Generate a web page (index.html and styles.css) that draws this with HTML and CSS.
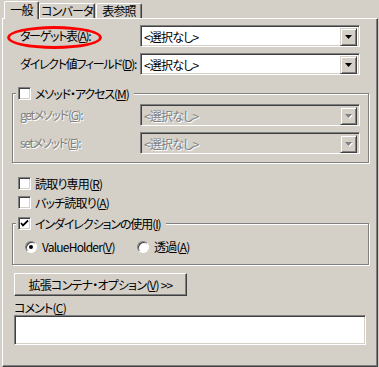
FILE: index.html
```html
<!DOCTYPE html>
<html lang="ja">

<head>
    <meta charset="UTF-8">
    <meta name="viewport" content="width=device-width, initial-scale=1.0">
    <title>一般</title>
    <link rel="stylesheet" href="styles.css">
</head>

<body>
    <div class="tabs">
        <div class="tab active">一般</div>
        <div class="tab tab-conv">コンバータ</div>
        <div class="tab tab-ref">表参照</div>
    </div>

    <div class="panel">
        <div class="row">
            <span class="lbl">ターゲット表(<u>A</u>):</span>
            <div class="combo">
                <span class="val">&lt;選択なし&gt;</span>
                <span class="drop"><svg width="7" height="4" viewBox="0 0 7 4"><polygon points="0,0 7,0 3.5,4" /></svg></span>
            </div>
        </div>
        <div class="row second">
            <span class="lbl">ダイレクト値フィールド(<u>D</u>):</span>
            <div class="combo">
                <span class="val">&lt;選択なし&gt;</span>
                <span class="drop"><svg width="7" height="4" viewBox="0 0 7 4"><polygon points="0,0 7,0 3.5,4" /></svg></span>
            </div>
        </div>

        <!-- method access -->
        <div class="group methods">
            <div class="legend">
                <span class="box"></span>
                <span>メソッド・アクセス(<u>M</u>)</span>
            </div>
            <div class="row inner first-inner">
                <span class="lbl off">getメソッド(<u>G</u>):</span>
                <div class="combo off">
                    <span class="val">&lt;選択なし&gt;</span>
                    <span class="drop"><svg width="8" height="5" viewBox="0 0 8 5"><polygon class="shadow" points="1,1 8,1 4.5,5" /><polygon points="0,0 7,0 3.5,4" /></svg></span>
                </div>
            </div>
            <div class="row inner">
                <span class="lbl off">setメソッド(<u>E</u>):</span>
                <div class="combo off">
                    <span class="val">&lt;選択なし&gt;</span>
                    <span class="drop"><svg width="8" height="5" viewBox="0 0 8 5"><polygon class="shadow" points="1,1 8,1 4.5,5" /><polygon points="0,0 7,0 3.5,4" /></svg></span>
                </div>
            </div>
        </div>

        <div class="check readonly">
            <span class="box"></span>
            <span>読取り専用(<u>R</u>)</span>
        </div>
        <div class="check batch">
            <span class="box"></span>
            <span>バッチ読取り(<u>A</u>)</span>
        </div>

        <!-- indirection -->
        <div class="group indirect">
            <div class="legend">
                <span class="box"><svg width="9" height="9" viewBox="0 0 9 9"><polyline points="1,4 3,6.5 8,1.5" /></svg></span>
                <span>インダイレクションの使用(<u>I</u>)</span>
            </div>
            <div class="options">
                <div class="option first-option">
                    <span class="radio"><span class="dot"></span></span>
                    <span>ValueHolder(<u>V</u>)</span>
                </div>
                <div class="option">
                    <span class="radio"></span>
                    <span>透過(<u>A</u>)</span>
                </div>
            </div>
        </div>

        <button class="btn">拡張コンテナ・オプション(<u>V</u>) &gt;&gt;</button>

        <div class="comment-lbl">コメント(<u>C</u>)</div>
        <div class="comment"></div>

        <span class="mark"></span>
    </div>
</body>

</html>
```

FILE: styles.css
```css
body {
    margin: 0;
    width: 379px;
    height: 367px;
    overflow: hidden;
    background-color: #d4d0c8;
    font-family: "Noto Sans CJK JP", "Noto Sans", sans-serif;
    font-size: 12px;
    font-feature-settings: "palt";
    letter-spacing: -0.8px;
    color: #000;
}

u {
    text-underline-offset: 1px;
}

/* tab strip */
.tabs {
    display: flex;
    align-items: flex-end;
    height: 18px;
    padding-left: 4px;
    position: relative;
    z-index: 1;
}

.tab {
    box-sizing: border-box;
    height: 15px;
    line-height: 13px;
    text-align: center;
    white-space: nowrap;
    background-color: #d4d0c8;
    border-top: 1px solid #fff;
    border-left: 1px solid #fff;
    border-right: 1px solid #404040;
    border-radius: 2px 2px 0 0;
    box-shadow: inset -1px 0 #808080;
}

.tab.active {
    width: 35px;
    height: 18px;
    line-height: 15px;
    margin-bottom: -1px;
}

.tab-conv {
    width: 56px;
}

.tab-ref {
    width: 46px;
    margin-left: 1px;
}

/* page body */
.panel {
    position: relative;
    box-sizing: border-box;
    margin-left: 2px;
    width: 376px;
    height: 349px;
    padding-top: 6px;
    border: 1px solid;
    border-color: #fff #404040 #404040 #fff;
    box-shadow: inset -1px -1px #808080;
}

.row {
    display: grid;
    grid-template-columns: 120px 220px;
    align-items: center;
    height: 22px;
    padding-left: 17px;
}

.row.second {
    margin-top: 6px;
}

.row.inner {
    padding-left: 7px;
    margin-top: 6px;
}

.row.first-inner {
    margin-top: 4px;
}

.lbl {
    white-space: nowrap;
    line-height: 14px;
    letter-spacing: -1.3px;
}

.off {
    color: #808080;
    text-shadow: 1px 1px 0 #fff;
}

.combo {
    display: flex;
    box-sizing: border-box;
    width: 220px;
    height: 22px;
    padding: 2px;
    background-color: #fff;
    border: 1px solid;
    border-color: #808080 #fff #fff #808080;
    box-shadow: inset 1px 1px #404040, inset -1px -1px #d4d0c8;
}

.combo.off {
    background-color: #d4d0c8;
}

.val {
    flex: 1;
    padding-left: 1px;
    line-height: 18px;
}

.drop {
    display: flex;
    align-items: center;
    justify-content: center;
    box-sizing: border-box;
    width: 17px;
    height: 18px;
    background-color: #d4d0c8;
    border: 1px solid;
    border-color: #d4d0c8 #404040 #404040 #d4d0c8;
    box-shadow: inset 1px 1px #fff, inset -1px -1px #808080;
}

.drop polygon {
    fill: #000;
}

.combo.off .drop polygon {
    fill: #808080;
}

.combo.off .drop polygon.shadow {
    fill: #fff;
}

/* group boxes */
.group {
    box-sizing: border-box;
    margin-left: 9px;
    width: 357px;
    border: 1px solid #808080;
    box-shadow: inset 1px 1px #fff, 1px 1px #fff;
}

.group.methods {
    margin-top: 18px;
    height: 70px;
}

.group.indirect {
    margin-top: 14px;
    height: 42px;
}

.legend {
    display: flex;
    align-items: center;
    gap: 4px;
    width: max-content;
    height: 13px;
    margin: -7px 0 0 3px;
    padding: 0 5px 0 2px;
    background-color: #d4d0c8;
    line-height: 14px;
    letter-spacing: -1.1px;
}

.box {
    display: flex;
    align-items: center;
    justify-content: center;
    box-sizing: border-box;
    width: 13px;
    height: 13px;
    background-color: #fff;
    border: 1px solid;
    border-color: #808080 #fff #fff #808080;
    box-shadow: inset 1px 1px #404040, inset -1px -1px #d4d0c8;
}

.box polyline {
    fill: none;
    stroke: #000;
    stroke-width: 1.8;
}

.check {
    display: flex;
    align-items: center;
    gap: 4px;
    height: 13px;
    padding-left: 15px;
    line-height: 14px;
}

.check.readonly {
    margin-top: 14px;
}

.check.batch {
    margin-top: 6px;
}

.options {
    display: flex;
    align-items: center;
    height: 14px;
    margin-top: 10px;
    padding-left: 12px;
}

.option {
    display: flex;
    align-items: center;
    gap: 5px;
    line-height: 14px;
}

.first-option {
    width: 112px;
}

.radio {
    display: flex;
    align-items: center;
    justify-content: center;
    box-sizing: border-box;
    width: 12px;
    height: 12px;
    border-radius: 50%;
    background-color: #fff;
    border: 1px solid;
    border-color: #808080 #fff #fff #808080;
    box-shadow: inset 1px 1px #404040;
}

.dot {
    width: 4px;
    height: 4px;
    border-radius: 50%;
    background-color: #000;
}

.btn {
    display: block;
    box-sizing: border-box;
    margin: 8px 0 0 11px;
    width: 173px;
    height: 23px;
    padding: 0;
    font: inherit;
    letter-spacing: inherit;
    color: #000;
    background-color: #d4d0c8;
    border: 1px solid;
    border-color: #fff #404040 #404040 #fff;
    box-shadow: inset -1px -1px #808080;
    line-height: 20px;
}

.comment-lbl {
    margin: 5px 0 0 11px;
    line-height: 14px;
}

.comment {
    box-sizing: border-box;
    margin-left: 11px;
    width: 352px;
    height: 30px;
    background-color: #fff;
    border: 1px solid;
    border-color: #808080 #fff #fff #808080;
    box-shadow: inset 1px 1px #404040, inset -1px -1px #d4d0c8;
}

/* red highlight drawn over the first label */
.mark {
    position: absolute;
    left: 4px;
    top: 7px;
    width: 95px;
    height: 23px;
    box-sizing: border-box;
    border: 3px solid #f00;
    border-radius: 50%;
}
```
